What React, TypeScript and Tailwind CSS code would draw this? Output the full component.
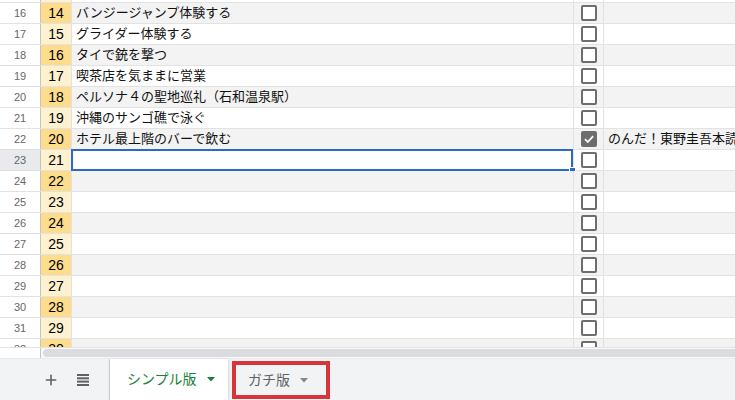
import React from 'react';
import { Plus } from 'lucide-react';

const font = { fontFamily: '"Liberation Sans", Arial, "Noto Sans CJK JP", sans-serif' };

type Row = { n: number; v: number; text?: string; checked?: boolean; note?: string };

const rows: Row[] = [
  { n: 15, v: 13 },
  { n: 16, v: 14, text: 'バンジージャンプ体験する' },
  { n: 17, v: 15, text: 'グライダー体験する' },
  { n: 18, v: 16, text: 'タイで銃を撃つ' },
  { n: 19, v: 17, text: '喫茶店を気ままに営業' },
  { n: 20, v: 18, text: 'ペルソナ４の聖地巡礼（石和温泉駅）' },
  { n: 21, v: 19, text: '沖縄のサンゴ礁で泳ぐ' },
  { n: 22, v: 20, text: 'ホテル最上階のバーで飲む', checked: true, note: 'のんだ！東野圭吾本読んだ' },
  { n: 23, v: 21 },
  { n: 24, v: 22 },
  { n: 25, v: 23 },
  { n: 26, v: 24 },
  { n: 27, v: 25 },
  { n: 28, v: 26 },
  { n: 29, v: 27 },
  { n: 30, v: 28 },
  { n: 31, v: 29 },
  { n: 32, v: 30 },
];

const Checkbox = ({ checked }: { checked?: boolean }) =>
  checked ? (
    <div className="w-[16px] h-[16px] rounded-[2px] bg-[#6d6d6d] flex items-center justify-center">
      <svg width="12" height="12" viewBox="0 0 12 12">
        <path d="M2 6.2 L4.8 9 L10.2 3.2" fill="none" stroke="#fff" strokeWidth="1.8" />
      </svg>
    </div>
  ) : (
    <div className="w-[16px] h-[16px] rounded-[2px] border-2 border-[#6d6d6d] bg-white" />
  );

const Caret = ({ color }: { color: string }) => (
  <svg width="8" height="5" viewBox="0 0 8 5" className="ml-[10px]">
    <path d="M0 0 L8 0 L4 4.5 Z" fill={color} />
  </svg>
);

const SheetRow = ({ r }: { r: Row }) => {
  const even = r.v % 2 === 0;
  const selected = r.n === 23;
  return (
    <div className="flex h-[21px] border-b border-[#e2e2e2] relative">
      <div
        className={`w-[41px] shrink-0 border-r border-[#c4c4c4] flex items-center justify-center text-[11px] text-[#666] ${
          selected ? 'bg-[#e8eaed]' : 'bg-white'
        }`}
      >
        {r.n}
      </div>
      <div
        className={`w-[31px] shrink-0 border-r border-[#e2e2e2] flex items-center justify-center text-[14px] text-black ${
          even ? 'bg-[#fddc8c]' : 'bg-[#fef1cf]'
        }`}
      >
        {r.v}
      </div>
      <div
        className={`w-[502px] shrink-0 border-r border-[#e2e2e2] flex items-center pl-[4px] text-[13px] text-[#111] whitespace-nowrap ${
          even && !selected ? 'bg-[#f3f3f3]' : 'bg-white'
        }`}
      >
        {r.text}
      </div>
      <div
        className={`w-[30px] shrink-0 border-r border-[#e2e2e2] flex items-center justify-center ${
          even ? 'bg-[#f3f3f3]' : 'bg-white'
        }`}
      >
        <Checkbox checked={r.checked} />
      </div>
      <div
        className={`flex-1 flex items-center pl-[4px] text-[13px] text-[#111] whitespace-nowrap overflow-hidden ${
          even ? 'bg-[#f3f3f3]' : 'bg-white'
        }`}
      >
        {r.note}
      </div>
      {selected && (
        <div className="absolute left-[71px] top-[-1px] w-[502px] h-[22px] border-2 border-[#2a6bc7] pointer-events-none">
          <div className="absolute right-[-5px] bottom-[-5px] w-[7px] h-[7px] bg-[#2a6bc7] border border-white" />
        </div>
      )}
    </div>
  );
};

export default function App() {
  return (
    <div className="w-[735px] h-[400px] overflow-hidden bg-white flex flex-col" style={font}>
      <div className="h-[347px] overflow-hidden shrink-0">
        <div className="-mt-[18px]">
          {rows.map((r) => (
            <SheetRow key={r.n} r={r} />
          ))}
        </div>
      </div>

      <div className="h-[11px] shrink-0 flex border-t border-[#e2e2e2]">
        <div className="w-[41px] border-r border-[#c4c4c4] bg-white" />
        <div className="flex-1 bg-[#f8f9fa] pt-[1px] pl-[2px]">
          <div className="h-[8px] bg-[#dadce0] rounded-l-[4px]" />
        </div>
      </div>

      <div className="flex-1 flex bg-[#f1f3f4] border-t border-[#e8eaed]">
        <div className="w-[110px] shrink-0 flex items-center pl-[43px] gap-[18px] text-[#5f6368] border-r border-[#dadce0]">
          <Plus size={16} strokeWidth={2.4} />
          <svg width="12" height="12" viewBox="0 0 12 12">
            <rect x="0" y="0" width="12" height="2" fill="#5f6368" />
            <rect x="0" y="3.3" width="12" height="2" fill="#5f6368" />
            <rect x="0" y="6.6" width="12" height="2" fill="#5f6368" />
            <rect x="0" y="10" width="12" height="2" fill="#5f6368" />
          </svg>
        </div>
        <div className="w-[118px] shrink-0 bg-white flex items-center pl-[17px] text-[14px] text-[#188038] shadow-[0_1px_3px_rgba(0,0,0,0.2)]">
          シンプル版
          <Caret color="#188038" />
        </div>
        <div className="ml-[4px] mt-[2px] mb-[1px] w-[98px] border-[4px] border-[#d6363b] flex items-center pl-[12px] text-[14px] text-[#5f6368]">
          ガチ版
          <Caret color="#80868b" />
        </div>
      </div>
    </div>
  );
}
